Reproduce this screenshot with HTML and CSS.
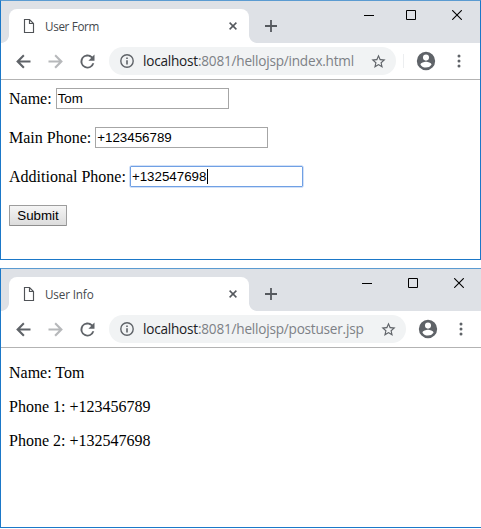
FILE: index.html
```html
<!DOCTYPE html>
<html lang="en">
<head>
<meta charset="utf-8">
<title>User Form</title>
<link rel="stylesheet" href="styles.css">
</head>
<body>
<svg class="defs" width="0" height="0">
  <symbol id="page" viewBox="0 0 12 14"><path d="M1.5.5h5l4 4v9h-9zM6.5.5v4h4" fill="none" stroke="#505357" stroke-width="1.15"/></symbol>
  <symbol id="x" viewBox="0 0 8 8"><path d="M.6.6l6.8 6.8M7.4.6L.6 7.4" stroke="#55595e" stroke-width="1.5"/></symbol>
  <symbol id="plus" viewBox="0 0 12 12"><path d="M6 0v12M0 6h12" stroke="#55595e" stroke-width="1.8"/></symbol>
  <symbol id="min" viewBox="0 0 10 10"><path d="M0 5.5h10" stroke="#000"/></symbol>
  <symbol id="max" viewBox="0 0 10 10"><path d="M.5.5h9v9h-9z" fill="none" stroke="#000"/></symbol>
  <symbol id="close" viewBox="0 0 10 10"><path d="M.2.2l9.6 9.6M9.8.2L.2 9.8" stroke="#000" stroke-width="1.1"/></symbol>
  <symbol id="back" viewBox="0 0 24 24"><path d="M20 10.8H8.2l5-5L11.6 4l-8 8 8 8 1.7-1.8-5.1-5H20z"/></symbol>
  <symbol id="reload" viewBox="0 0 24 24"><path d="M17.65 6.35A8 8 0 1 0 19.73 14h-2.3A5.8 5.8 0 1 1 12 6.2c1.6 0 3 .6 4.1 1.7L13 11h7V4z"/></symbol>
  <symbol id="info" viewBox="0 0 14 14"><circle cx="7" cy="7" r="6.2" fill="none" stroke="#5f6368" stroke-width="1.4"/><path d="M6.2 6.2h1.6v4.2H6.2zM6.2 3.5h1.6v1.6H6.2z"/></symbol>
  <symbol id="star" viewBox="0 0 24 24"><path d="M22 9.24l-7.19-.62L12 2 9.19 8.63 2 9.24l5.46 4.73L5.82 21 12 17.27 18.18 21l-1.63-7.03zM12 15.4l-3.76 2.27 1-4.28-3.32-2.88 4.38-.38L12 6.1l1.71 4.04 4.38.38-3.32 2.88 1 4.28z"/></symbol>
  <symbol id="user" viewBox="0 0 24 24"><path d="M12 2a10 10 0 1 0 0 20 10 10 0 0 0 0-20zm0 3a3.3 3.3 0 1 1 0 6.6A3.3 3.3 0 0 1 12 5zm0 14.2a7.2 7.2 0 0 1-6-3.22c.03-1.99 4-3.08 6-3.08 1.99 0 5.97 1.09 6 3.08a7.2 7.2 0 0 1-6 3.22z"/></symbol>
  <symbol id="dots" viewBox="0 0 4 14"><circle cx="2" cy="2" r="1.5"/><circle cx="2" cy="7" r="1.5"/><circle cx="2" cy="12" r="1.5"/></symbol>
</svg>

<section class="window form-window">
  <header class="titlebar">
    <div class="tab">
      <svg class="page-icon"><use href="#page"/></svg>
      <span class="tab-title">User Form</span>
      <svg class="tab-close"><use href="#x"/></svg>
    </div>
    <svg class="new-tab"><use href="#plus"/></svg>
    <div class="controls">
      <svg><use href="#min"/></svg><svg><use href="#max"/></svg><svg><use href="#close"/></svg>
    </div>
  </header>
  <nav class="toolbar">
    <svg class="nav-icon"><use href="#back"/></svg>
    <svg class="nav-icon forward"><use href="#back"/></svg>
    <svg class="nav-icon"><use href="#reload"/></svg>
    <div class="address">
      <svg class="info-icon"><use href="#info"/></svg>
      <span class="url"><b>localhost</b>:8081/hellojsp/index.html</span>
      <svg class="star-icon"><use href="#star"/></svg>
    </div>
    <i class="divider"></i>
    <svg class="user-icon"><use href="#user"/></svg>
    <svg class="dots-icon"><use href="#dots"/></svg>
  </nav>
  <main class="content">
    <form class="form">
      <label class="row">Name: <span class="field">Tom</span></label>
      <label class="row">Main Phone: <span class="field">+123456789</span></label>
      <label class="row">Additional Phone: <span class="field focused">+132547698<i class="caret"></i></span></label>
      <button class="submit" type="button">Submit</button>
    </form>
  </main>
</section>

<section class="window info-window">
  <header class="titlebar">
    <div class="tab">
      <svg class="page-icon"><use href="#page"/></svg>
      <span class="tab-title info-title">User Info</span>
      <svg class="tab-close"><use href="#x"/></svg>
    </div>
    <svg class="new-tab"><use href="#plus"/></svg>
    <div class="controls">
      <svg><use href="#min"/></svg><svg><use href="#max"/></svg><svg><use href="#close"/></svg>
    </div>
  </header>
  <nav class="toolbar">
    <svg class="nav-icon"><use href="#back"/></svg>
    <svg class="nav-icon forward"><use href="#back"/></svg>
    <svg class="nav-icon"><use href="#reload"/></svg>
    <div class="address">
      <svg class="info-icon"><use href="#info"/></svg>
      <span class="url"><b>localhost</b>:8081/hellojsp/postuser.jsp</span>
      <svg class="star-icon"><use href="#star"/></svg>
    </div>
    <svg class="user-icon"><use href="#user"/></svg>
    <svg class="dots-icon"><use href="#dots"/></svg>
  </nav>
  <main class="content">
    <p>Name: Tom</p>
    <p>Phone 1: +123456789</p>
    <p>Phone 2: +132547698</p>
  </main>
</section>
</body>
</html>
```
FILE: styles.css
```css
* { box-sizing: border-box; }
body { margin: 0; background: #fff; display: flex; flex-direction: column; gap: 8px; height: 529px; overflow: hidden; }
svg { display: block; flex: none; fill: #5f6368; }
.defs { position: absolute; }
.window { width: 481px; height: 260px; flex: none; border: 1px solid #1b78c8; border-top-color: #5b9bd1; background: #fff; }
.info-window { border-right: 0; }
.titlebar { height: 42px; padding: 8px 0 0 8px; background: #dee1e6; display: flex; }
.tab { position: relative; width: 240px; height: 34px; padding: 0 11px 0 14px; background: #fff; border-radius: 8px 8px 0 0; display: flex; align-items: center; }
.tab::before, .tab::after { content: ""; position: absolute; bottom: 0; width: 8px; height: 8px; }
.tab::before { left: -8px; background: radial-gradient(circle at 0 0, transparent 7.5px, #fff 8.3px); }
.tab::after { right: -8px; background: radial-gradient(circle at 100% 0, transparent 7.5px, #fff 8.3px); }
.page-icon { width: 12px; height: 14px; }
.tab-title { margin-left: 10px; font: 11.7px/16px "Open Sans", sans-serif; letter-spacing: -0.35px; color: #45494d; }
.info-title { letter-spacing: -0.15px; }
.tab-close { width: 8px; height: 8px; margin-left: auto; margin-right: 1px; }
.new-tab { width: 12px; height: 12px; margin: 11px 0 0 16px; }
.controls { display: flex; margin: 1px 18px 0 auto; }
.controls svg { width: 10px; height: 10px; }
.form-window .controls svg + svg { margin-left: 32px; }
.form-window .controls svg:last-child { margin-left: 36px; }
.info-window .controls { margin-right: 17px; gap: 36px; }
.toolbar { height: 37px; border-bottom: 1px solid #b3b3b3; padding: 0 0 0 11.5px; display: flex; align-items: center; }
.nav-icon { width: 21px; height: 21px; margin-right: 11px; }
.forward { transform: scaleX(-1); opacity: .45; }
.address { width: 287px; height: 28px; padding: 0 9.5px 0 11px; margin-left: .5px; border-radius: 14px; background: #f1f3f4; display: flex; align-items: center; }
.info-window .address { width: 297px; }
.info-icon { width: 14px; height: 14px; }
.url { margin-left: 9px; font: 13.6px/20px "Open Sans", sans-serif; letter-spacing: -0.22px; color: #7d8186; white-space: nowrap; }
.url b { font-weight: 400; color: #202124; }
.star-icon { width: 17px; height: 17px; margin-left: auto; }
.divider { width: 1px; height: 14px; margin-left: 7px; background: #eceef0; }
.user-icon { width: 22px; height: 22px; margin-left: 11px; }
.dots-icon { width: 4px; height: 14px; margin-left: 19.5px; }
.content { padding: 8px; font: 16px/18px "Liberation Serif", serif; color: #000; }
.content p { margin: 8px 0 16px; }
.content p + p { margin-top: 0; }
.form { display: flex; flex-direction: column; align-items: flex-start; gap: 18px; }
.row { height: 21px; display: flex; align-items: center; gap: 4px; white-space: nowrap; }
.field { width: 173px; height: 21px; padding: 0 1px; border: 1px solid #a6a6a6; display: flex; align-items: center; font: 13.333px/15px "Liberation Sans", sans-serif; }
.focused { border-color: #70a0e4; border-radius: 1px; box-shadow: 0 0 0 .5px #a5c4f2; }
.caret { width: 1px; height: 15px; margin-left: .6px; background: #000; }
.submit { width: 58px; height: 21px; padding: 0; border: 1px solid #9d9d9d; border-bottom-color: #8e8e8e; border-radius: 1px; background: linear-gradient(#f5f5f5, #dcdcdc); color: #000; font: 13.333px/15px "Liberation Sans", sans-serif; }
```
